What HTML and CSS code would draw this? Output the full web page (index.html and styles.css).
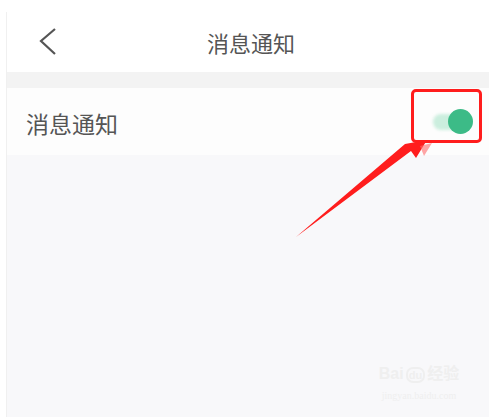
FILE: index.html
```html
<!DOCTYPE html>
<html lang="zh-CN">
<head>
    <meta charset="UTF-8">
    <meta name="viewport" content="width=device-width, initial-scale=1.0">
    <title>消息通知</title>
    <link rel="stylesheet" href="styles.css">
</head>
<body>
    <div class="screen">
        <div class="header">
            <svg class="back" width="24" height="32" viewBox="0 0 24 32">
                <polyline points="18,3 4,15 18,28" fill="none" stroke="#555" stroke-width="2.2"/>
            </svg>
            <h1 class="title">消息通知</h1>
        </div>
        <div class="gap"></div>
        <div class="row">
            <span class="row-label">消息通知</span>
            <div class="switch">
                <div class="track"></div>
                <div class="knob"></div>
            </div>
        </div>
        <div class="rest"></div>
    </div>

    <!-- annotation overlay -->
    <div class="mark-box"></div>
    <svg class="arrow" width="489" height="417" viewBox="0 0 489 417">
        <polygon points="296,237 405,144 427,140 416,158 411,151" fill="#ff1d1d"/>
        <polygon points="420,146 432,143 424,156" fill="#ff6a6a" opacity="0.6"/>
    </svg>

    <div class="watermark">
        <div class="wm-logo">Bai<span class="wm-du">du</span>经验</div>
        <div class="wm-url">jingyan.baidu.com</div>
    </div>
</body>
</html>
```

FILE: styles.css
```css
body {
    margin: 0;
    background: #fff;
    font-family: "Noto Sans CJK SC", "Noto Sans", sans-serif;
    color: #555;
    width: 489px;
    height: 417px;
    overflow: hidden;
    position: relative;
}
.screen {
    margin: 12px 0 0 6px;
    border-left: 1px solid #f0f0f0;
    height: 405px;
    display: flex;
    flex-direction: column;
    background: #f8f8fa;
}
.header {
    height: 60px;
    background: #fff;
    display: flex;
    align-items: center;
    justify-content: center;
    position: relative;
}
.back {
    position: absolute;
    left: 30px;
    top: 14px;
}
.title {
    margin: 0;
    font-size: 22px;
    font-weight: normal;
    color: #555;
    padding-left: 6px;
}
.gap {
    height: 16px;
    background: #f3f3f3;
}
.row {
    height: 67px;
    background: #fdfdfd;
    display: flex;
    align-items: center;
    justify-content: space-between;
    padding: 0 16px 0 19px;
}
.row-label {
    font-size: 23px;
    padding-top: 3px;
}
.switch {
    position: relative;
    width: 40px;
    height: 26px;
}
.track {
    position: absolute;
    left: 0;
    top: 5px;
    width: 36px;
    height: 16px;
    border-radius: 8px;
    background: #cbeede;
    filter: blur(1.5px);
}
.knob {
    position: absolute;
    right: 0;
    top: 0;
    width: 25px;
    height: 25px;
    border-radius: 50%;
    background: #3cbb87;
    filter: blur(0.6px);
}
.rest {
    flex: 1;
}
.mark-box {
    position: absolute;
    left: 411px;
    top: 89px;
    width: 65px;
    height: 48px;
    border: 3px solid #ff1d1d;
    border-radius: 5px;
}
.arrow {
    position: absolute;
    left: 0;
    top: 0;
}
.watermark {
    position: absolute;
    left: 374px;
    top: 363px;
    width: 90px;
    color: #efefef;
    text-align: center;
    font-family: "Liberation Sans", "Noto Sans CJK SC", sans-serif;
}
.wm-logo {
    font-size: 16px;
    font-weight: bold;
    line-height: 22px;
    white-space: nowrap;
}
.wm-du {
    font-size: 11px;
    border: 2px solid #efefef;
    border-radius: 7px;
    padding: 0 1px;
    margin: 0 2px;
}
.wm-url {
    font-family: "Liberation Serif", serif;
    font-size: 10px;
    margin-top: 4px;
}
```
